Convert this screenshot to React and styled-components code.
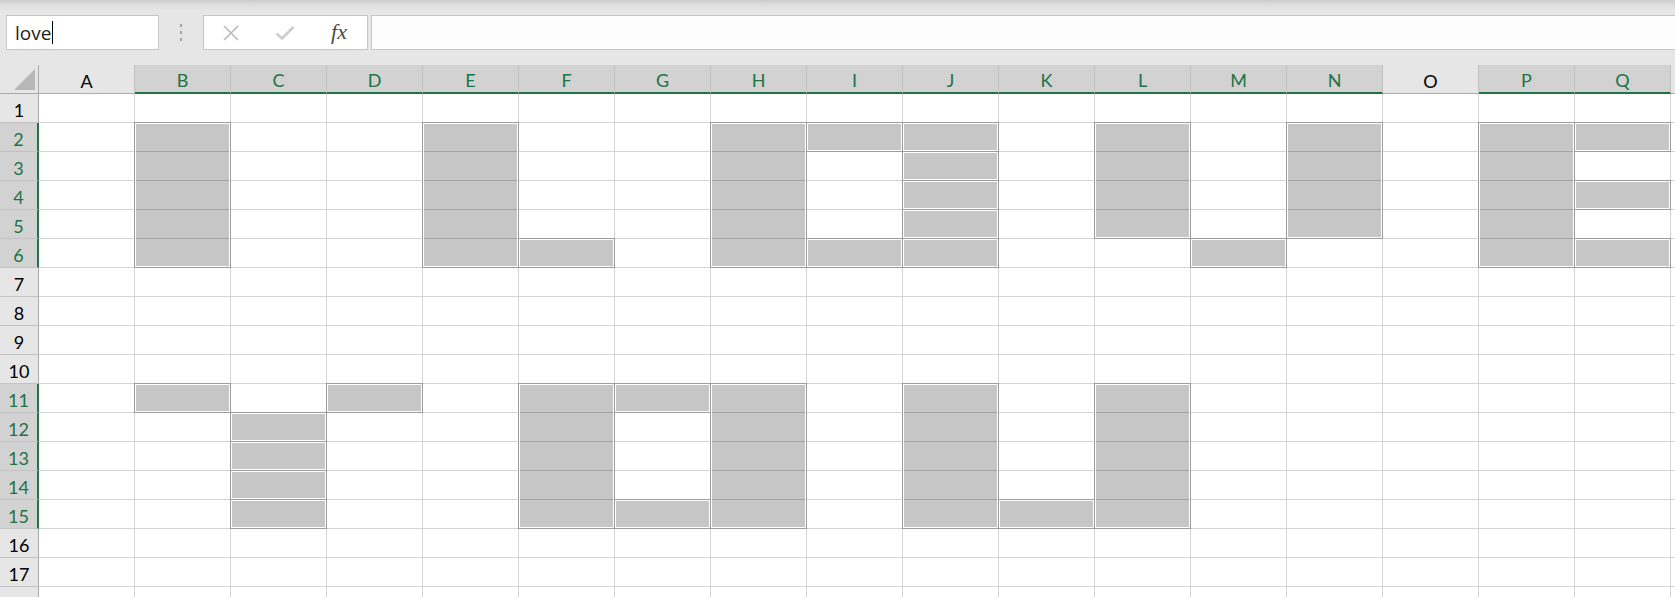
import React from "react";
import styled, { createGlobalStyle } from "styled-components";

const GREEN = "#217346";
const COLS = "ABCDEFGHIJKLMNOPQR".split("");
const ROW_COUNT = 18;

// the named range "love" - each entry is one area of the selection
const AREAS = [
  ["B", 2, 6], ["E", 2, 6], ["F", 6, 6], ["H", 2, 6],
  ["I", 2, 2], ["I", 6, 6],
  ["J", 2, 2], ["J", 3, 3], ["J", 4, 4], ["J", 5, 5], ["J", 6, 6],
  ["L", 2, 5], ["M", 6, 6], ["N", 2, 5], ["P", 2, 6],
  ["Q", 2, 2], ["Q", 4, 4], ["Q", 6, 6],
  ["B", 11, 11], ["D", 11, 11],
  ["C", 12, 12], ["C", 13, 13], ["C", 14, 14], ["C", 15, 15],
  ["F", 11, 15], ["G", 11, 11], ["G", 15, 15], ["H", 11, 15],
  ["J", 11, 15], ["K", 15, 15], ["L", 11, 15],
];

const selectedCols = new Set(AREAS.map((a) => a[0]));
const isRowSelected = (r) => AREAS.some((a) => r >= a[1] && r <= a[2]);
const colIndex = (l) => COLS.indexOf(l) + 2;

const GlobalStyle = createGlobalStyle`
  html, body {
    margin: 0;
    padding: 0;
    overflow: hidden;
    background: #fff;
  }
  * { box-sizing: border-box; }
`;

const Page = styled.div`
  width: 100vw;
  height: 100vh;
  overflow: hidden;
  font-family: Lato, "Open Sans", sans-serif;
`;

const Toolbar = styled.div`
  height: 65px;
  display: flex;
  align-items: flex-start;
  padding: 15px 0 0 6px;
  background: linear-gradient(to bottom, #cdcdcd 0px, #dedede 5px, #e6e6e6 11px);
`;

const NameBox = styled.div`
  width: 153px;
  height: 35px;
  background: #fff;
  border: 1px solid #c6c6c6;
  display: flex;
  align-items: center;
  padding-left: 8px;
  font-family: "Open Sans", sans-serif;
  font-size: 19px;
  color: #1e1e1e;
`;

const Caret = styled.span`
  display: inline-block;
  width: 1px;
  height: 23px;
  margin-left: 1px;
  background: #000;
`;

const Grip = styled.div`
  width: 44px;
  height: 35px;
  display: flex;
  flex-direction: column;
  align-items: center;
  justify-content: center;
  gap: 4px;

  span {
    width: 2px;
    height: 3px;
    background: #a6a6a6;
  }
`;

const FuncBox = styled.div`
  width: 165px;
  height: 35px;
  background: #fff;
  border: 1px solid #c6c6c6;
  display: flex;
  align-items: center;
`;

const FuncButton = styled.div`
  width: 54px;
  height: 100%;
  display: flex;
  align-items: center;
  justify-content: center;
`;

const Fx = styled.span`
  font-family: "Liberation Serif", serif;
  font-style: italic;
  font-size: 22px;
  color: #4a4a4a;
  margin-top: -2px;
`;

const FormulaInput = styled.div`
  flex: 1;
  height: 35px;
  margin-left: 3px;
  background: #fdfdfd;
  border: 1px solid #c6c6c6;
  border-right: none;
`;

const Sheet = styled.div`
  display: grid;
  grid-template-columns: 39px repeat(${COLS.length}, 96px);
  grid-template-rows: 29px repeat(${ROW_COUNT}, 29px);
`;

const Corner = styled.div`
  grid-column: 1;
  grid-row: 1;
  background: #e6e6e6;
  border-right: 1px solid #ababab;
  border-bottom: 1px solid #ababab;
  display: flex;
  align-items: flex-end;
  justify-content: flex-end;
  padding: 0 3px 3px 0;
`;

const Triangle = styled.div`
  width: 0;
  height: 0;
  border-left: 21px solid transparent;
  border-bottom: 21px solid #b8b8b8;
`;

const ColHead = styled.div`
  grid-row: 1;
  grid-column: ${(p) => p.$c};
  background: ${(p) => (p.$sel ? "#d2d2d2" : "#e6e6e6")};
  color: ${(p) => (p.$sel ? GREEN : "#000")};
  border-right: 1px solid #c2c2c2;
  border-bottom: ${(p) => (p.$sel ? `2px solid ${GREEN}` : "1px solid #ababab")};
  display: flex;
  align-items: center;
  justify-content: center;
  padding-top: 3px;
  font-size: 18px;
`;

const RowHead = styled.div`
  grid-column: 1;
  grid-row: ${(p) => p.$r + 1};
  background: ${(p) => (p.$sel ? "#d2d2d2" : "#e6e6e6")};
  color: ${(p) => (p.$sel ? GREEN : "#000")};
  border-right: ${(p) => (p.$sel ? `2px solid ${GREEN}` : "1px solid #ababab")};
  border-bottom: 1px solid #c2c2c2;
  display: flex;
  align-items: center;
  justify-content: center;
  padding-top: 3px;
  font-size: 18px;
`;

const Cell = styled.div`
  grid-column: ${(p) => p.$c};
  grid-row: ${(p) => p.$r + 1};
  background: #fff;
  border-right: 1px solid #d4d4d4;
  border-bottom: 1px solid #d4d4d4;
`;

const Area = styled.div`
  grid-column: ${(p) => p.$c};
  grid-row: ${(p) => `${p.$r1 + 1} / ${p.$r2 + 2}`};
  margin: -1px 0 0 -1px;
  border: 1px solid #9c9c9c;
  box-shadow: inset 0 0 0 1px #fff;
  background: repeating-linear-gradient(
    to bottom,
    #c6c6c6 0px,
    #c6c6c6 28px,
    #a3a3a3 28px,
    #a3a3a3 29px
  );
`;

const CloseIcon = () => (
  <svg width="18" height="18" viewBox="0 0 18 18">
    <path d="M2 2 L16 16 M16 2 L2 16" stroke="#b9b9b9" strokeWidth="1.6" fill="none" />
  </svg>
);

const CheckIcon = () => (
  <svg width="20" height="16" viewBox="0 0 20 16">
    <path d="M1.5 8.5 L7 13.5 L18.5 2" stroke="#cdcdcd" strokeWidth="2.6" fill="none" />
  </svg>
);

const rows = Array.from({ length: ROW_COUNT }, (_, i) => i + 1);

const App = () => {
  return (
    <Page>
      <GlobalStyle />
      <Toolbar>
        <NameBox>
          love
          <Caret />
        </NameBox>
        <Grip>
          <span />
          <span />
          <span />
        </Grip>
        <FuncBox>
          <FuncButton>
            <CloseIcon />
          </FuncButton>
          <FuncButton>
            <CheckIcon />
          </FuncButton>
          <FuncButton>
            <Fx>fx</Fx>
          </FuncButton>
        </FuncBox>
        <FormulaInput />
      </Toolbar>

      <Sheet>
        <Corner>
          <Triangle />
        </Corner>
        {COLS.map((l) => (
          <ColHead key={l} $c={colIndex(l)} $sel={selectedCols.has(l)}>
            {/* column R is only a sliver at the window edge */}
            {l === "R" ? null : l}
          </ColHead>
        ))}
        {rows.map((r) => (
          <React.Fragment key={r}>
            <RowHead $r={r} $sel={isRowSelected(r)}>
              {r}
            </RowHead>
            {COLS.map((l) => (
              <Cell key={l} $r={r} $c={colIndex(l)} />
            ))}
          </React.Fragment>
        ))}
        {AREAS.map(([l, r1, r2]) => (
          <Area key={`${l}${r1}`} $c={colIndex(l)} $r1={r1} $r2={r2} />
        ))}
      </Sheet>
    </Page>
  );
};

export default App;
